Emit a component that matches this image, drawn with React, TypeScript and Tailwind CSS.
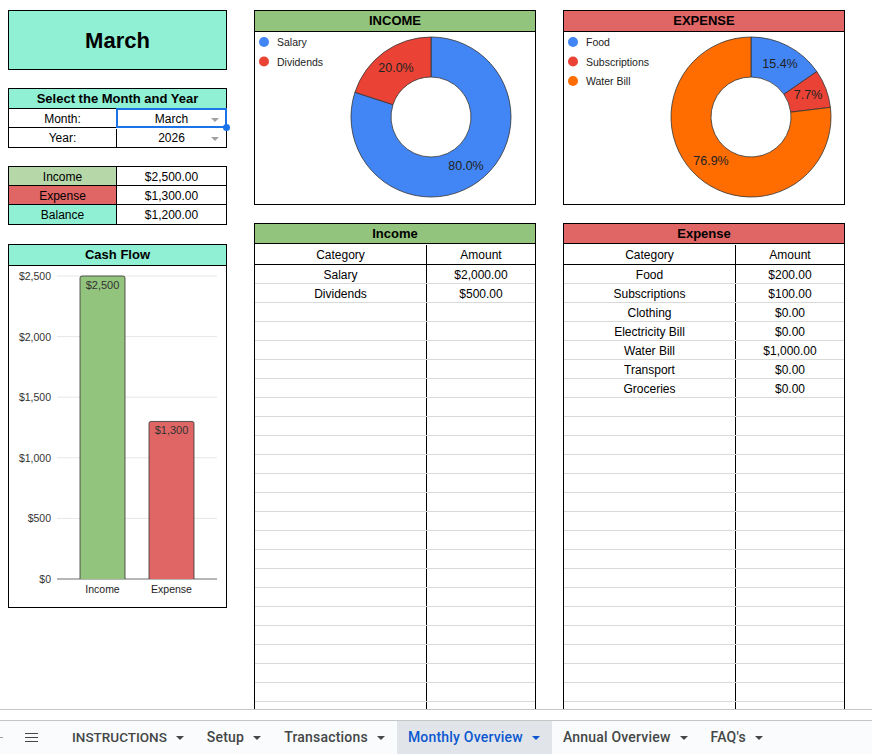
import React from 'react';

type Slice = { label: string; value: number; color: string };

const BLUE = '#4285f4';
const RED = '#ea4335';
const ORANGE = '#ff6d01';

// donut segment between two fractions of the circle, starting at 12 o'clock
function segment(cx: number, cy: number, r0: number, r1: number, f0: number, f1: number) {
  const pt = (r: number, f: number) => [cx + r * Math.sin(2 * Math.PI * f), cy - r * Math.cos(2 * Math.PI * f)];
  const large = f1 - f0 > 0.5 ? 1 : 0;
  const [ax, ay] = pt(r1, f0);
  const [bx, by] = pt(r1, f1);
  const [cx2, cy2] = pt(r0, f1);
  const [dx, dy] = pt(r0, f0);
  return `M${ax} ${ay} A${r1} ${r1} 0 ${large} 1 ${bx} ${by} L${cx2} ${cy2} A${r0} ${r0} 0 ${large} 0 ${dx} ${dy} Z`;
}

function Donut({
  title,
  headerBg,
  slices,
  cx,
  labels,
}: {
  title: string;
  headerBg: string;
  slices: Slice[];
  cx: number;
  labels: { text: string; x: number; y: number }[];
}) {
  const total = slices.reduce((s, x) => s + x.value, 0);
  let acc = 0;
  return (
    <div className="border border-black h-[195px] flex flex-col">
      <div className={`h-[21px] border-b border-black flex items-center justify-center text-[13px] font-bold ${headerBg}`}>
        {title}
      </div>
      <svg width="280" height="172" className="block">
        {slices.map((s, i) => (
          <g key={s.label}>
            <circle cx="9" cy={10 + i * 19.5} r="5" fill={s.color} />
            <text x="22" y={14 + i * 19.5} fontSize="10.5" fill="#222">
              {s.label}
            </text>
          </g>
        ))}
        {slices.map((s) => {
          const f0 = acc / total;
          acc += s.value;
          const f1 = acc / total;
          return <path key={s.label} d={segment(cx, 85, 40, 80, f0, f1)} fill={s.color} stroke="#333" strokeWidth="0.8" />;
        })}
        {labels.map((l) => (
          <text key={l.text} x={l.x} y={l.y} fontSize="12.5" textAnchor="middle" fill="#222">
            {l.text}
          </text>
        ))}
      </svg>
    </div>
  );
}

function LedgerTable({ title, headerBg, rows }: { title: string; headerBg: string; rows: [string, string][] }) {
  const filled = [...rows, ...Array.from({ length: 26 - rows.length }, () => ['', ''] as [string, string])];
  return (
    <div className="border border-black flex-1 text-[12px]">
      <div className={`h-[20px] border-b border-black flex items-center justify-center text-[13px] font-bold ${headerBg}`}>
        {title}
      </div>
      <div className="h-[21px] pt-[1px] border-b border-black flex">
        <div className="w-[172px] border-r border-black flex items-center justify-center">Category</div>
        <div className="flex-1 flex items-center justify-center">Amount</div>
      </div>
      {filled.map(([c, a], i) => (
        <div key={i} className="h-[19px] border-b border-[#d9d9d9] flex">
          <div className="w-[172px] pt-[1px] border-r border-black flex items-center justify-center">{c}</div>
          <div className="flex-1 pt-[1px] flex items-center justify-center">{a}</div>
        </div>
      ))}
    </div>
  );
}

function CashFlow() {
  const base = 313;
  const scale = 303 / 2500;
  const ticks = [0, 500, 1000, 1500, 2000, 2500];
  const bars = [
    { label: 'Income', value: 2500, x: 71, color: '#93c47d' },
    { label: 'Expense', value: 1300, x: 140, color: '#e06666' },
  ];
  return (
    <div className="mt-[19px] border border-black h-[364px] flex flex-col">
      <div className="h-[21px] border-b border-black bg-[#8ff0d4] flex items-center justify-center text-[13px] font-bold">
        Cash Flow
      </div>
      <svg width="217" height="340" className="block">
        {ticks.map((t) => {
          const y = base - t * scale;
          return (
            <g key={t}>
              <line x1="48" x2="208" y1={y} y2={y} stroke={t === 0 ? '#9e9e9e' : '#e6e6e6'} strokeWidth={t === 0 ? 1.3 : 1} />
              <text x="42" y={y + 4} fontSize="10.5" textAnchor="end" fill="#333">
                ${t.toLocaleString('en-US')}
              </text>
            </g>
          );
        })}
        {bars.map((b) => {
          const h = b.value * scale;
          const top = base - h;
          return (
            <g key={b.label}>
              <path
                d={`M${b.x} ${base} L${b.x} ${top + 2} Q${b.x} ${top} ${b.x + 2} ${top} L${b.x + 43} ${top} Q${b.x + 45} ${top} ${b.x + 45} ${top + 2} L${b.x + 45} ${base}`}
                fill={b.color}
                stroke="#333"
                strokeWidth="0.8"
              />
              <text x={b.x + 22.5} y={top + 13} fontSize="11" textAnchor="middle" fill="#333">
                ${b.value.toLocaleString('en-US')}
              </text>
              <text x={b.x + 22.5} y="327" fontSize="10.5" textAnchor="middle" fill="#222">
                {b.label}
              </text>
            </g>
          );
        })}
      </svg>
    </div>
  );
}

function Caret({ className = 'border-t-[#444746]' }: { className?: string }) {
  return <span className={`inline-block w-0 h-0 border-l-[4px] border-r-[4px] border-t-[4px] border-l-transparent border-r-transparent ${className}`} />;
}

function SheetTabs() {
  const tabs = ['INSTRUCTIONS', 'Setup', 'Transactions', 'Monthly Overview', 'Annual Overview', "FAQ's"];
  return (
    <div className="h-[34px] border-t border-[#c4c7c5] bg-[#f9fbfd] flex items-stretch font-['Roboto',sans-serif] font-medium text-[#444746]">
      <div className="w-[3px] self-center h-[1px] bg-[#9aa0a6]" />
      <div className="ml-[22px] w-[13px] flex flex-col justify-center gap-[2.5px]">
        <span className="h-[1.5px] bg-[#444746]" />
        <span className="h-[1.5px] bg-[#444746]" />
        <span className="h-[1.5px] bg-[#444746]" />
      </div>
      <div className="ml-[23px] flex">
        {tabs.map((t) => {
          const active = t === 'Monthly Overview';
          const caps = t === t.toUpperCase();
          return (
            <div
              key={t}
              className={`flex items-center gap-[9px] pl-[11px] pr-[12px] ${caps ? 'text-[13.5px]' : 'text-[14px] tracking-[0.2px]'} ${active ? 'bg-[#e1e5ea] text-[#0b57d0]' : ''}`}
            >
              <span>{t}</span>
              <Caret className={active ? 'border-t-[#0b57d0]' : 'border-t-[#444746]'} />
            </div>
          );
        })}
      </div>
    </div>
  );
}

function CellArrow() {
  return <span className="absolute right-[7px] top-[8px] w-0 h-0 border-l-[4px] border-r-[4px] border-t-[4px] border-l-transparent border-r-transparent border-t-[#a0a0a0]" />;
}

export default function App() {
  return (
    <div className="w-[872px] h-[754px] bg-white overflow-hidden flex flex-col text-black font-['Liberation_Sans',Arial,sans-serif]">
      <div className="h-[710px] border-b border-[#c7c7c7] overflow-hidden flex pl-[8px] pt-[10px]">
        {/* left column: title, pickers, totals, bar chart */}
        <div className="w-[219px] flex flex-col">
          <div className="h-[60px] border border-black bg-[#8ff0d4] flex items-center justify-center text-[22px] font-bold">
            March
          </div>

          <div className="mt-[18px] border border-black text-[12px]">
            <div className="h-[20px] border-b border-black bg-[#8ff0d4] flex items-center justify-center text-[13px] font-bold">
              Select the Month and Year
            </div>
            <div className="h-[19px] pt-[1px] border-b border-black flex">
              <div className="w-[108px] border-r border-black flex items-center justify-center">Month:</div>
              <div className="relative flex-1 flex items-center justify-center">
                March
                <CellArrow />
                <span className="absolute -left-[1px] -top-[2px] -right-[1px] -bottom-[1px] border-2 border-[#1a73e8]" />
                <span className="absolute -right-[4px] -bottom-[4px] w-[7px] h-[7px] rounded-full bg-[#1a73e8]" />
              </div>
            </div>
            <div className="h-[19px] pt-[1px] flex">
              <div className="w-[108px] border-r border-black flex items-center justify-center">Year:</div>
              <div className="relative flex-1 flex items-center justify-center">
                2026
                <CellArrow />
              </div>
            </div>
          </div>

          <div className="mt-[18px] border border-black text-[12px]">
            {[
              ['Income', '$2,500.00', 'bg-[#b6d7a8]'],
              ['Expense', '$1,300.00', 'bg-[#e06666]'],
              ['Balance', '$1,200.00', 'bg-[#8ff0d4]'],
            ].map(([k, v, bg], i) => (
              <div key={k} className={`h-[19px] flex ${i < 2 ? 'border-b border-black' : ''}`}>
                <div className={`w-[108px] pt-[1px] border-r border-black flex items-center justify-center ${bg}`}>{k}</div>
                <div className="flex-1 pt-[1px] flex items-center justify-center">{v}</div>
              </div>
            ))}
          </div>

          <CashFlow />
        </div>

        {/* income column */}
        <div className="ml-[27px] w-[282px] flex flex-col">
          <Donut
            title="INCOME"
            headerBg="bg-[#93c47d]"
            cx={176}
            slices={[
              { label: 'Salary', value: 2000, color: BLUE },
              { label: 'Dividends', value: 500, color: RED },
            ]}
            labels={[
              { text: '20.0%', x: 141, y: 40 },
              { text: '80.0%', x: 211, y: 138 },
            ]}
          />
          <div className="mt-[18px] flex flex-col flex-1">
            <LedgerTable
              title="Income"
              headerBg="bg-[#93c47d]"
              rows={[
                ['Salary', '$2,000.00'],
                ['Dividends', '$500.00'],
              ]}
            />
          </div>
        </div>

        {/* expense column */}
        <div className="ml-[27px] w-[282px] flex flex-col">
          <Donut
            title="EXPENSE"
            headerBg="bg-[#e06666]"
            cx={187}
            slices={[
              { label: 'Food', value: 200, color: BLUE },
              { label: 'Subscriptions', value: 100, color: RED },
              { label: 'Water Bill', value: 1000, color: ORANGE },
            ]}
            labels={[
              { text: '15.4%', x: 216, y: 36 },
              { text: '7.7%', x: 244, y: 67 },
              { text: '76.9%', x: 147, y: 133 },
            ]}
          />
          <div className="mt-[18px] flex flex-col flex-1">
            <LedgerTable
              title="Expense"
              headerBg="bg-[#e06666]"
              rows={[
                ['Food', '$200.00'],
                ['Subscriptions', '$100.00'],
                ['Clothing', '$0.00'],
                ['Electricity Bill', '$0.00'],
                ['Water Bill', '$1,000.00'],
                ['Transport', '$0.00'],
                ['Groceries', '$0.00'],
              ]}
            />
          </div>
        </div>
      </div>
      <div className="h-[10px]" />
      <SheetTabs />
    </div>
  );
}
